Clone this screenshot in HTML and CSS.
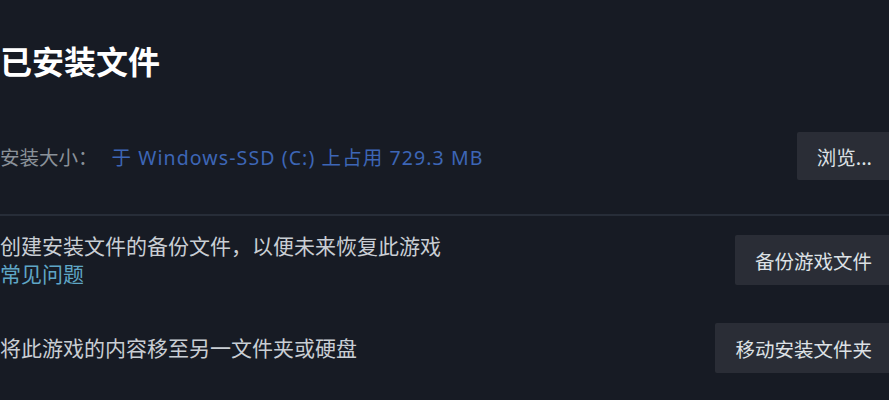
FILE: index.html
```html
<!DOCTYPE html>
<html lang='zh-CN'>
<head>
    <meta charset='UTF-8'>
    <meta name='viewport' content='width=device-width, initial-scale=1.0'>
    <title>已安装文件</title>
    <link rel="stylesheet" href="styles.css">
</head>
<body>
    <div id='content'>
        <h1>已安装文件</h1>
        <div class='row first'>
            <div class='info'>
                <span class='label'>安装大小：</span>
                <span class='size'>于 Windows-SSD (C:) 上占用 729.3 MB</span>
            </div>
            <button type='button' class='btn'>浏览...</button>
        </div>
        <hr>
        <div class='row'>
            <div class='desc'>
                <div>创建安装文件的备份文件，以便未来恢复此游戏</div>
                <a href='#' class='faq'>常见问题</a>
            </div>
            <button type='button' class='btn'>备份游戏文件</button>
        </div>
        <div class='row last'>
            <div class='desc'>将此游戏的内容移至另一文件夹或硬盘</div>
            <button type='button' class='btn'>移动安装文件夹</button>
        </div>
    </div>
</body>
</html>
```

FILE: styles.css
```css
html, body {
    margin: 0; padding: 0;
    height: 100%;
    background: #171b24;
    overflow: hidden;
    font-family: "Noto Sans", "Noto Sans CJK SC", sans-serif;
}
#content {
    padding: 40px 0 0 0;
    margin-right: -3px;
}
h1 {
    margin: 0;
    font-size: 32px; line-height: 40px;
    font-weight: bold;
    color: #ffffff;
    font-family: "Noto Sans CJK SC", sans-serif;
}
.row {
    display: flex;
    align-items: center;
    justify-content: space-between;
    margin-top: 16px;
}
.row.first { margin-top: 52px; }
.row.last { margin-top: 35px; }
.info { font-size: 19px; }
.label { color: #8a9199; font-size: 19.5px; margin-right: 9px; }
.size { color: #3d66b6; font-size: 19.5px; letter-spacing: 1.1px; }
.desc {
    font-size: 21px; line-height: 28px;
    color: #c9ced4;
}
.faq { color: #5fa6c6; text-decoration: none; }
hr {
    border: 0;
    border-top: 2px solid #272d38;
    margin: 34px 0 0 0;
}
.btn {
    height: 50px;
    padding: 0 20px;
    border: 0; border-radius: 2px;
    background: #2a2d36;
    color: #dde1e5;
    font-family: "Noto Sans CJK SC", sans-serif;
    font-size: 19.5px;
}
.row.first .btn { height: 48px; }
```
